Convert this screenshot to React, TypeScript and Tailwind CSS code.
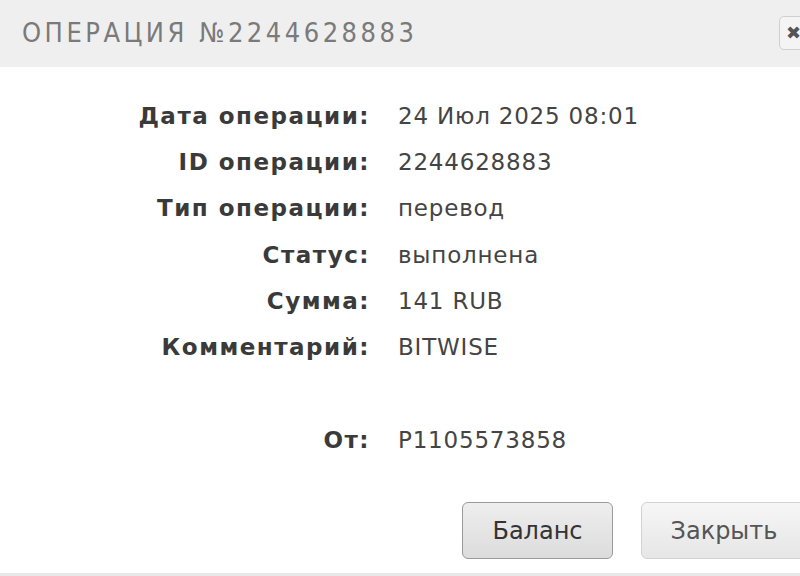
export default function App() {
  const rows: [string, string][] = [
    ["Дата операции:", "24 Июл 2025 08:01"],
    ["ID операции:", "2244628883"],
    ["Тип операции:", "перевод"],
    ["Статус:", "выполнена"],
    ["Сумма:", "141 RUB"],
    ["Комментарий:", "BITWISE"],
    ["", ""],
    ["От:", "P1105573858"],
  ];
  return (
    <div className="w-[800px] h-[576px] overflow-hidden bg-white relative">
      <div className="h-[67px] bg-[#efefef] flex items-center pl-[22px] pb-[3px] relative">
        <div
          className="text-[27px] text-[#7a7a7a] tracking-[3.5px] leading-none"
          style={{ fontFamily: '"DejaVu Sans Condensed", "DejaVu Sans", sans-serif', fontStretch: "condensed" }}
        >
          ОПЕРАЦИЯ №2244628883
        </div>
        <div className="absolute left-[779px] top-[16px] w-[40px] h-[34px] rounded-[5px] border border-[#d0d0d0] bg-[#f4f4f4] flex items-center pl-[6px]">
          <span className="text-[18px] text-[#555] font-bold leading-none" style={{ fontFamily: '"DejaVu Sans", sans-serif' }}>✖</span>
        </div>
      </div>
      <div
        className="pt-[26px] grid grid-cols-[342px_1fr] gap-x-7 pl-7"
        style={{ fontFamily: '"DejaVu Sans", sans-serif' }}
      >
        {rows.map(([l, v], i) => (
          <div key={i} className="contents">
            <div className="h-[46.3px] flex items-center justify-end text-[23px] font-bold text-[#3a3a3a] tracking-[1.5px]">{l}</div>
            <div className="h-[46.3px] flex items-center text-[23px] text-[#444] tracking-[0.8px]">{v}</div>
          </div>
        ))}
      </div>
      <div className="flex gap-7 pl-[462px] mt-[39px]" style={{ fontFamily: '"DejaVu Sans", sans-serif' }}>
        <div className="w-[151px] h-[57px] shrink-0 rounded-[6px] border border-[#9a9a9a] bg-gradient-to-b from-[#eeeeee] to-[#dcdcdc] flex items-center justify-center text-[24px] text-[#333]">
          Баланс
        </div>
        <div className="w-[166px] h-[57px] shrink-0 rounded-[6px] border border-[#d2d2d2] bg-gradient-to-b from-[#f6f6f6] to-[#e6e6e6] flex items-center justify-center text-[24px] text-[#555]">
          Закрыть
        </div>
      </div>
      <div className="absolute left-0 right-0 top-[573px] h-[3px] bg-[#e8e8e8]" />
    </div>
  );
}
